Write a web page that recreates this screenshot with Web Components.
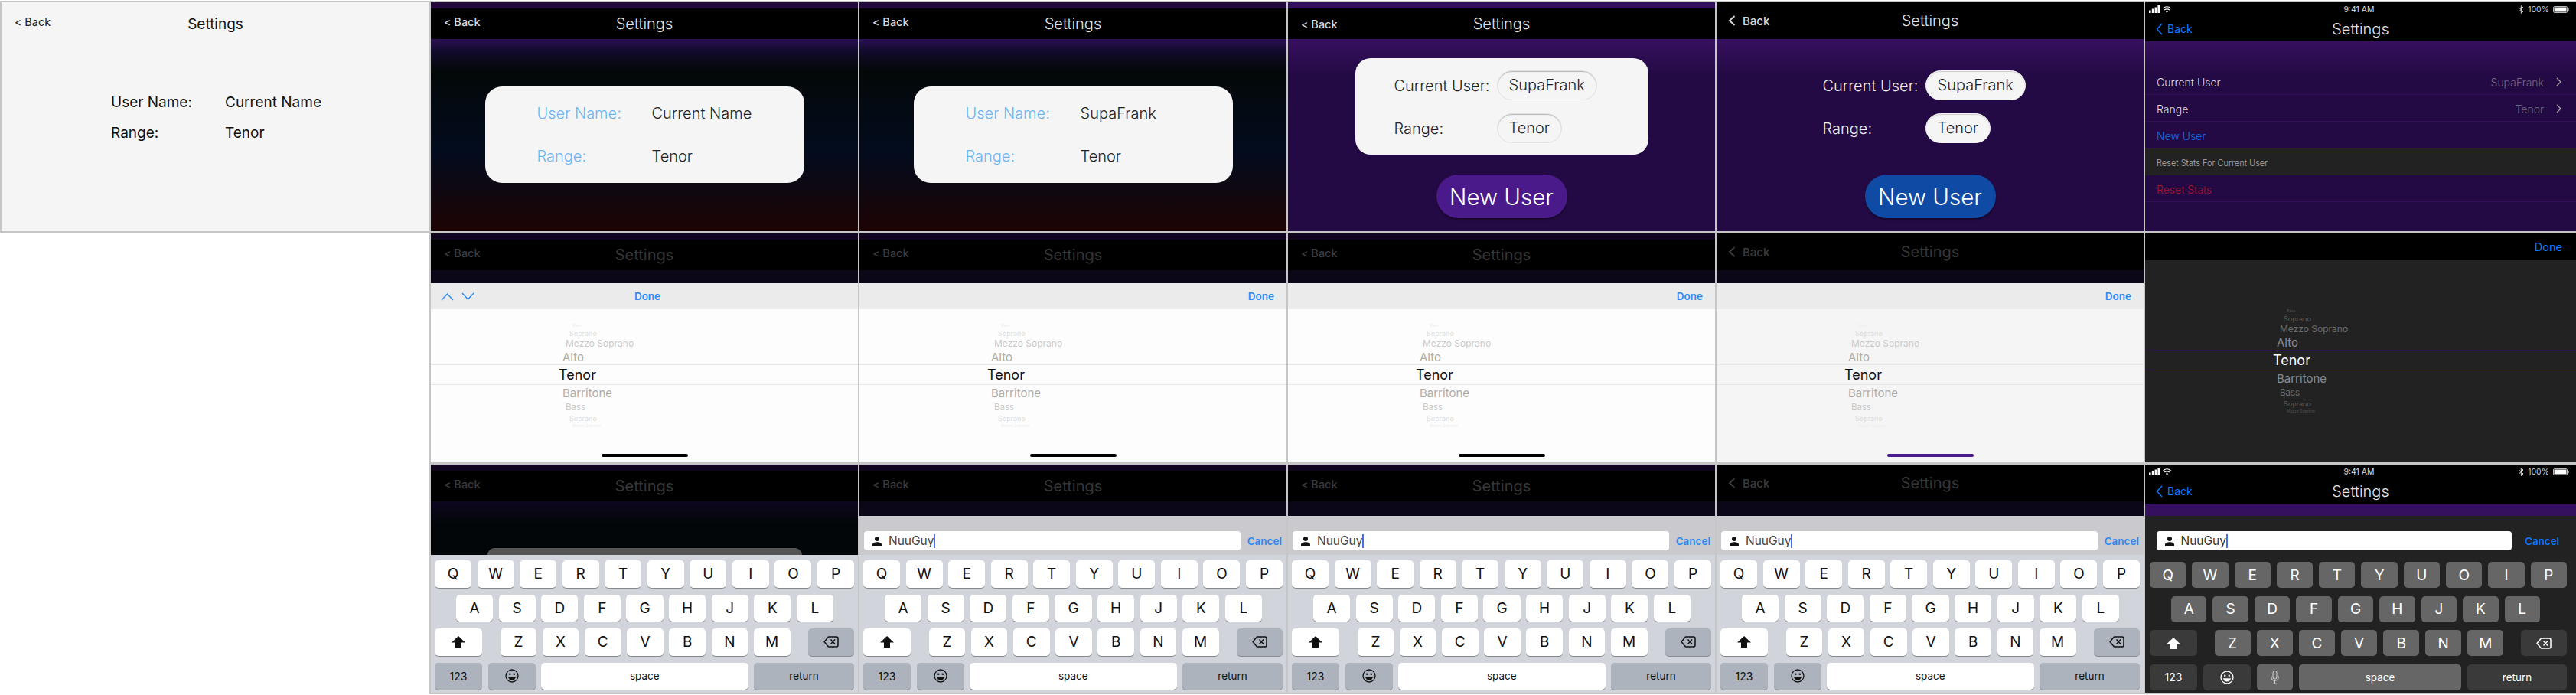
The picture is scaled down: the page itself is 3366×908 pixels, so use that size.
<!DOCTYPE html>
<html lang="en">
<head>
<meta charset="utf-8">
<title>Settings screens</title>
<style>
  html, body { margin: 0; background: #fff; }
  body { font-family: Inter, "Liberation Sans", sans-serif; }
  .board {
    display: grid;
    width: 3366px;
    height: 908px;
    box-sizing: border-box;
    padding: 3px 0 0 2px;
    grid-template-columns: 559px 558px 558px 558px 558px 1fr;
    grid-template-rows: 299px 299px 298px;
    gap: 3px 2px;
  }
</style>
</head>
<body>
<div class="board">
  <app-frame bg="paper">
    <app-nav tone="light"></app-nav>
    <user-form variant="plain" label-one="User Name:" value-one="Current Name"></user-form>
  </app-frame>
  <app-frame bg="night">
    <app-nav></app-nav>
    <user-form variant="card" label-one="User Name:" value-one="Current Name"></user-form>
  </app-frame>
  <app-frame bg="night">
    <app-nav></app-nav>
    <user-form variant="card" label-one="User Name:" value-one="SupaFrank"></user-form>
  </app-frame>
  <app-frame bg="purple">
    <app-nav strip="#33105c" low></app-nav>
    <user-form variant="pills" label-one="Current User:" value-one="SupaFrank"></user-form>
    <new-user color="#4a1a8a"></new-user>
  </app-frame>
  <app-frame bg="purple">
    <app-nav kind="chevron"></app-nav>
    <user-form variant="bare" label-one="Current User:" value-one="SupaFrank"></user-form>
    <new-user color="#0f4ba5"></new-user>
  </app-frame>
  <app-frame bg="purple">
    <app-nav kind="status"></app-nav>
    <settings-list></settings-list>
  </app-frame>

  <app-frame bg="dim" style="grid-column: 2">
    <app-nav dim></app-nav>
    <dim-band></dim-band>
    <picker-bar done="center" arrows></picker-bar>
    <wheel-picker></wheel-picker>
  </app-frame>
  <app-frame bg="dim">
    <app-nav dim></app-nav>
    <dim-band></dim-band>
    <picker-bar></picker-bar>
    <wheel-picker></wheel-picker>
  </app-frame>
  <app-frame bg="dim">
    <app-nav dim></app-nav>
    <dim-band></dim-band>
    <picker-bar></picker-bar>
    <wheel-picker></wheel-picker>
  </app-frame>
  <app-frame bg="dim">
    <app-nav dim kind="chevron"></app-nav>
    <dim-band></dim-band>
    <picker-bar></picker-bar>
    <wheel-picker tone="soft"></wheel-picker>
  </app-frame>
  <app-frame bg="coal">
    <picker-bar tone="dark"></picker-bar>
    <wheel-picker tone="dark"></wheel-picker>
  </app-frame>

  <app-frame bg="dim" style="grid-column: 2">
    <app-nav dim></app-nav>
    <dim-band stub></dim-band>
    <ios-keyboard></ios-keyboard>
  </app-frame>
  <app-frame bg="dim">
    <app-nav dim></app-nav>
    <dim-band size="19"></dim-band>
    <search-bar></search-bar>
    <ios-keyboard></ios-keyboard>
  </app-frame>
  <app-frame bg="dim">
    <app-nav dim></app-nav>
    <dim-band size="19"></dim-band>
    <search-bar></search-bar>
    <ios-keyboard></ios-keyboard>
  </app-frame>
  <app-frame bg="dim">
    <app-nav dim kind="chevron"></app-nav>
    <dim-band size="19"></dim-band>
    <search-bar></search-bar>
    <ios-keyboard></ios-keyboard>
  </app-frame>
  <app-frame bg="coal">
    <app-nav kind="status"></app-nav>
    <dim-band size="16" color="#35105f"></dim-band>
    <search-bar tone="dark"></search-bar>
    <ios-keyboard tone="dark" letters="QWERTYUOIP" mic></ios-keyboard>
  </app-frame>
</div>

<script>
// icons used by several elements
const ICONS = {
  shift: '<svg width="18" height="15" viewBox="0 0 18 15"><path fill="currentColor" d="M9 0 L18 8.5 H13 V15 H5 V8.5 H0 Z"/></svg>',
  back: '<svg width="20" height="15" viewBox="0 0 20 15"><path fill="none" stroke="currentColor" stroke-width="1.5" stroke-linejoin="round" d="M6.5 1 H17 a2 2 0 0 1 2 2 V12 a2 2 0 0 1 -2 2 H6.5 L1 7.5 Z"/><path fill="none" stroke="currentColor" stroke-width="1.5" d="M9.5 4.5 L15 10.5 M15 4.5 L9.5 10.5"/></svg>',
  emoji: '<svg width="18" height="18" viewBox="0 0 18 18"><circle cx="9" cy="9" r="8" fill="none" stroke="currentColor" stroke-width="1.3"/><circle cx="6.2" cy="6.8" r="1.2" fill="currentColor"/><circle cx="11.8" cy="6.8" r="1.2" fill="currentColor"/><path fill="currentColor" d="M4 10.2 H14 C13.6 13 11.6 14.6 9 14.6 C6.4 14.6 4.4 13 4 10.2 Z"/></svg>',
  mic: '<svg width="11" height="18" viewBox="0 0 11 18"><rect x="3" y="0.5" width="5" height="10.5" rx="2.5" fill="none" stroke="currentColor" stroke-width="1.1"/><path fill="none" stroke="currentColor" stroke-width="1.1" d="M0.8 7.5 V8.5 C0.8 11.2 2.8 13.2 5.5 13.2 C8.2 13.2 10.2 11.2 10.2 8.5 V7.5 M5.5 13.2 V17 M2.5 17.4 H8.5"/></svg>',
  person: '<svg width="12" height="12" viewBox="0 0 12 12"><circle cx="6" cy="3" r="3" fill="currentColor"/><path fill="currentColor" d="M0 12 V10.4 C0 8.2 3 7.2 6 7.2 C9 7.2 12 8.2 12 10.4 V12 Z"/></svg>',
  chevron: '<svg width="10" height="16" viewBox="0 0 10 16"><path fill="none" stroke="currentColor" stroke-width="2" d="M8.5 2 L2 8 L8.5 14"/></svg>',
  thinBack: '<svg width="9" height="16" viewBox="0 0 9 16"><path fill="none" stroke="currentColor" stroke-width="1.4" d="M8 1 L1.5 8 L8 15"/></svg>',
  disclosure: '<svg width="7" height="12" viewBox="0 0 7 12"><path fill="none" stroke="currentColor" stroke-width="1.2" d="M1 1 L6 6 L1 11"/></svg>',
  up: '<svg width="17" height="11" viewBox="0 0 17 11"><path fill="none" stroke="currentColor" stroke-width="1.4" d="M1 10 L8.5 2 L16 10"/></svg>',
  down: '<svg width="17" height="11" viewBox="0 0 17 11"><path fill="none" stroke="currentColor" stroke-width="1.4" d="M1 1 L8.5 9 L16 1"/></svg>',
  signal: '<svg width="15" height="10" viewBox="0 0 15 10"><rect x="0" y="6.5" width="2.6" height="3.5" fill="#fff"/><rect x="3.8" y="4.5" width="2.6" height="5.5" fill="#fff"/><rect x="7.6" y="2.5" width="2.6" height="7.5" fill="#fff"/><rect x="11.4" y="0" width="2.6" height="10" fill="#fff"/></svg>',
  wifi: '<svg width="11" height="9" viewBox="0 0 11 9"><path fill="none" stroke="#fff" stroke-width="1.3" d="M0.5 3 C3.5 0.2 7.5 0.2 10.5 3 M2.3 5 C4 3.5 7 3.5 8.7 5"/><path fill="#fff" d="M5.5 9 L3.8 6.8 C4.8 6 6.2 6 7.2 6.8 Z"/></svg>',
  bluetooth: '<svg width="7" height="11" viewBox="0 0 7 11"><path fill="none" stroke="#ddd" stroke-width="1" d="M0.5 3 L6 8 L3.3 10.4 V0.6 L6 3 L0.5 8"/></svg>',
  battery: '<svg width="21" height="9" viewBox="0 0 21 9"><rect x="0.5" y="0.5" width="18" height="8" rx="1.5" fill="none" stroke="#bbb"/><rect x="1.5" y="1.5" width="16" height="6" rx="0.6" fill="#fff"/><rect x="19.5" y="3" width="1.2" height="3" fill="#bbb"/></svg>'
};

class AppFrame extends HTMLElement {
  constructor() {
    super();
    this.attachShadow({ mode: 'open' });
    this.shadowRoot.innerHTML = `
      <style>
        :host {
          display: flex;
          flex-direction: column;
          min-width: 0;
          overflow: hidden;
          box-shadow: 0 0 0 2px #c6c6c6;
          position: relative;
        }
        :host([bg="paper"]) { background: #f5f5f5; }
        :host([bg="night"]) { background: linear-gradient(#2b1054 48px, #120a2c 64px, #030808 90px, #030c1e 195px, #1d0303 299px); }
        :host([bg="purple"]) { background: linear-gradient(#37105f 48px, #240a45 95px); }
        :host([bg="dim"]) { background: #0b0618; }
        :host([bg="coal"]) { background: #222; }
      </style>
      <slot></slot>`;
  }
}

class AppNav extends HTMLElement {
  constructor() {
    super();
    this.attachShadow({ mode: 'open' });
  }

  connectedCallback() {
    const kind = this.getAttribute('kind') || 'old';
    let backHtml = '<span class="lt">&lt;</span> Back';
    if (kind === 'chevron') backHtml = `<span class="ico">${ICONS.chevron}</span>Back`;
    if (kind === 'status') backHtml = `<span class="ico">${ICONS.thinBack}</span>Back`;
    const status = kind === 'status' ? `
      <div class="status">
        <span class="side">${ICONS.signal}${ICONS.wifi}</span>
        <span class="time">9:41 AM</span>
        <span class="side right">${ICONS.bluetooth}<span>100%</span>${ICONS.battery}</span>
      </div>` : '';
    const strip = kind === 'old' ? '<div class="strip"></div>' : '';
    this.shadowRoot.innerHTML = `
      <style>
        :host { display: block; background: #000; color: #fff; flex: none; }
        .strip { height: 8px; background: var(--strip, #24093f); }
        .bar {
          display: grid;
          grid-template-columns: 1fr auto 1fr;
          align-items: center;
          height: 40px;
        }
        .title { font-size: 20px; font-weight: 300; color: #e4e4e4; }
        .back {
          padding-left: 17px;
          margin-bottom: 6px;
          font-size: 14.5px;
          font-weight: 500;
          color: #d8d8d8;
          display: flex;
          align-items: center;
        }
        .lt { font-size: 14px; margin-right: 4px; }
        .ico { display: inline-flex; }
        :host([low]) .back { margin-bottom: 0; }
        :host([kind="chevron"]) .bar { height: 48px; }
        :host([kind="chevron"]) .back { padding-left: 15px; margin-bottom: 0; font-size: 15px; }
        :host([kind="chevron"]) .ico { margin-right: 9px; }
        :host([kind="status"]) .bar { height: 33px; }
        :host([kind="status"]) .back {
          padding-left: 14px;
          margin-bottom: 0;
          color: #0a7aff;
          font-weight: 400;
          font-size: 14px;
        }
        :host([kind="status"]) .ico { margin-right: 6px; }
        :host([tone="light"]) { background: transparent; color: #111; }
        :host([tone="light"]) .strip { background: transparent; }
        :host([tone="light"]) .title { color: #111; font-weight: 400; font-size: 19px; }
        :host([tone="light"]) .back { color: #222; font-weight: 400; }
        :host([dim]) .title { color: #363636; font-weight: 400; }
        :host([dim]) .back { color: #3c3c3c; }
        :host([dim]) .strip { background: #12051f; }
        .status {
          height: 18px;
          padding: 0 9px 0 5px;
          display: grid;
          grid-template-columns: 1fr auto 1fr;
          align-items: center;
          font-size: 10.5px;
          color: #ddd;
        }
        .side { display: flex; align-items: center; gap: 3px; }
        .right { justify-content: flex-end; gap: 5px; color: #ccc; }
      </style>
      ${status}
      ${strip}
      <div class="bar">
        <div class="back">${backHtml}</div>
        <div class="title">Settings</div>
        <div></div>
      </div>`;
    const stripColor = this.getAttribute('strip');
    if (stripColor) this.style.setProperty('--strip', stripColor);
  }
}

class UserForm extends HTMLElement {
  constructor() {
    super();
    this.attachShadow({ mode: 'open' });
  }

  connectedCallback() {
    const labelOne = this.getAttribute('label-one');
    const valueOne = this.getAttribute('value-one');
    this.shadowRoot.innerHTML = `
      <style>
        :host { display: flex; justify-content: center; flex: none; }
        .form {
          display: grid;
          align-items: center;
          font-size: 20px;
          font-weight: 300;
          color: #222;
          box-sizing: border-box;
          background: #f5f5f5;
        }
        /* plain first screen */
        :host([variant="plain"]) .form {
          background: transparent;
          width: 100%;
          margin-top: 62px;
          padding-left: 143px;
          grid-template-columns: 149px 1fr;
          grid-auto-rows: 40px;
          font-size: 19px;
          font-weight: 400;
          color: #111;
        }
        /* white card with blue labels */
        :host([variant="card"]) .form {
          width: 417px;
          height: 126px;
          margin-top: 62px;
          padding: 7px 0 0 68px;
          border-radius: 22px;
          grid-template-columns: 150px 1fr;
          grid-auto-rows: 56px;
          align-content: start;
        }
        :host([variant="card"]) .label { color: #6db6f6; }
        /* card with pills, and the same without the card */
        :host([variant="pills"]) .form,
        :host([variant="bare"]) .form {
          width: 383px;
          height: 126px;
          margin-top: 25px;
          padding: 16px 0 0 51px;
          border-radius: 20px;
          grid-template-columns: 134px 1fr;
          grid-auto-rows: 39px;
          row-gap: 17px;
          align-content: start;
        }
        :host([variant="bare"]) .form { background: transparent; }
        :host([variant="bare"]) .label { color: #eee; }
        :host([variant="pills"]) .value,
        :host([variant="bare"]) .value {
          justify-self: start;
          line-height: 37px;
          padding: 0 15px;
          border-radius: 20px;
          background: #f5f5f5;
          border: 1px solid #e2e2e2;
          box-shadow: inset 0 1px 1px #b4b4b4;
        }
        :host([variant="bare"]) .value { border-color: #f5f5f5; box-shadow: inset 0 1px 1px #ccc; }
      </style>
      <div class="form">
        <div class="label">${labelOne}</div><div class="value">${valueOne}</div>
        <div class="label">Range:</div><div class="value">Tenor</div>
      </div>`;
  }
}

class NewUser extends HTMLElement {
  constructor() {
    super();
    this.attachShadow({ mode: 'open' });
  }

  connectedCallback() {
    this.shadowRoot.innerHTML = `
      <style>
        :host { display: flex; justify-content: center; flex: none; margin-top: 26px; }
        button {
          width: 171px;
          height: 57px;
          border: 0;
          border-radius: 29px;
          font: 300 29.5px Inter, "Liberation Sans", sans-serif;
          color: #fff;
          background: ${this.getAttribute('color')};
          box-shadow: 0 2px 3px rgba(0,0,0,.45);
        }
      </style>
      <button>New User</button>`;
  }
}

class SettingsList extends HTMLElement {
  constructor() {
    super();
    this.attachShadow({ mode: 'open' });
  }

  connectedCallback() {
    const row = (cls, left, right) => `
      <div class="row ${cls}">
        <span>${left}</span>
        ${right ? `<span class="val">${right}</span><span class="dis">${ICONS.disclosure}</span>` : ''}
      </div>`;
    this.shadowRoot.innerHTML = `
      <style>
        :host { display: block; padding-top: 35px; font-size: 14px; font-weight: 300; color: #ddd; }
        .row {
          display: flex;
          align-items: center;
          height: 35px;
          box-sizing: border-box;
          padding: 2px 19px 0 15px;
          border-bottom: 1px solid #331058;
        }
        .val { margin-left: auto; color: #6f6a80; }
        .dis { display: inline-flex; margin-left: 16px; color: #aaa; }
        .blue { color: #0a6fe6; }
        .head { background: #222; border-bottom: 0; font-size: 11px; color: #aaa; }
        .red { color: #a8152a; }
      </style>
      ${row('', 'Current User', 'SupaFrank')}
      ${row('', 'Range', 'Tenor')}
      ${row('blue', 'New User')}
      ${row('head', 'Reset Stats For Current User')}
      ${row('red', 'Reset Stats')}`;
  }
}

class DimBand extends HTMLElement {
  constructor() {
    super();
    this.attachShadow({ mode: 'open' });
  }

  connectedCallback() {
    const size = this.getAttribute('size');
    const color = this.getAttribute('color');
    const stub = this.hasAttribute('stub');
    this.shadowRoot.innerHTML = `
      <style>
        :host {
          display: flex;
          align-items: flex-end;
          justify-content: center;
          overflow: hidden;
          height: ${size ? size + 'px' : stub ? '70px' : '17px'};
          background: ${color || (stub ? 'linear-gradient(#0e0620, #020608 30px)' : '#0b0618')};
          flex: none;
        }
        .stub { width: 411px; height: 9px; background: #555; border-radius: 22px 22px 0 0; }
      </style>
      ${stub ? '<div class="stub"></div>' : ''}`;
  }
}

class PickerBar extends HTMLElement {
  constructor() {
    super();
    this.attachShadow({ mode: 'open' });
  }

  connectedCallback() {
    const arrows = this.hasAttribute('arrows')
      ? `<span class="arrows">${ICONS.up}${ICONS.down}</span>` : '';
    this.shadowRoot.innerHTML = `
      <style>
        :host {
          display: flex;
          align-items: center;
          justify-content: flex-end;
          position: relative;
          height: 34px;
          padding: 0 16px;
          flex: none;
          background: #ebebeb;
          font-size: 13.5px;
          font-weight: 600;
          color: #2a8af6;
        }
        :host([done="center"]) { justify-content: center; padding-left: 24px; }
        :host([tone="dark"]) {
          background: #000;
          color: #0a7aff;
          height: 35px;
          padding-right: 18px;
          font-size: 14.5px;
          font-weight: 400;
        }
        .arrows {
          position: absolute;
          left: 13px;
          top: 12px;
          display: flex;
          gap: 10px;
        }
      </style>
      ${arrows}<span>Done</span>`;
  }
}

class WheelPicker extends HTMLElement {
  constructor() {
    super();
    this.attachShadow({ mode: 'open' });
  }

  connectedCallback() {
    this.shadowRoot.innerHTML = `
      <style>
        :host {
          display: flex;
          flex-direction: column;
          flex: 1;
          padding-top: 16px;
          background: #fdfdfd;
          --near: #acacac;
          --mid: #cacaca;
          --far: #dcdcdc;
          --tiny: #ececec;
          --pick: #111;
          --line: #e8e8e8;
          --home: #000;
        }
        :host([tone="soft"]) { background: #f5f5f5; --home: #4a1a8a; }
        :host([tone="dark"]) {
          background: #222;
          padding-top: 61px;
          --near: #8c8c8c;
          --mid: #6c6c6c;
          --far: #5c5c5c;
          --tiny: #505050;
          --pick: #fff;
          --line: #2c1448;
        }
        .i { display: flex; align-items: center; white-space: nowrap; }
        .t5 { height: 10px; font-size: 5px; padding-left: 185px; color: var(--tiny); }
        .t9 { height: 10px; font-size: 9px; padding-left: 181px; color: var(--far); }
        .t12 { height: 16px; font-size: 12px; padding-left: 176px; color: var(--mid); }
        .t15 { height: 20px; font-size: 15px; padding-left: 172px; color: var(--near); }
        .b11 { height: 18px; font-size: 11.5px; padding-left: 176px; color: var(--mid); }
        .pick {
          height: 27px;
          box-sizing: border-box;
          font-size: 18px;
          padding-left: 167px;
          color: var(--pick);
          border-top: 1px solid var(--line);
          border-bottom: 1px solid var(--line);
        }
        .home {
          width: 113px;
          height: 4px;
          margin: auto auto 7px;
          border-radius: 2px;
          background: var(--home);
        }
        :host([tone="dark"]) .home { display: none; }
      </style>
      <div class="i t5">Bass</div>
      <div class="i t9">Soprano</div>
      <div class="i t12">Mezzo Soprano</div>
      <div class="i t15">Alto</div>
      <div class="i pick">Tenor</div>
      <div class="i t15">Barritone</div>
      <div class="i b11">Bass</div>
      <div class="i t9">Soprano</div>
      <div class="i t5">Mezzo Soprano</div>
      <div class="home"></div>`;
  }
}

class SearchBar extends HTMLElement {
  constructor() {
    super();
    this.attachShadow({ mode: 'open' });
  }

  connectedCallback() {
    this.shadowRoot.innerHTML = `
      <style>
        :host {
          display: flex;
          align-items: center;
          flex: none;
          padding: 20px 6px 6px;
          background: #c9c9ce;
        }
        :host([tone="dark"]) { background: #222; padding: 20px 22px 15px 14.5px; }
        .field {
          flex: 1;
          display: flex;
          align-items: center;
          height: 25px;
          padding-left: 11px;
          border-radius: 4px;
          background: #fff;
          font-size: 15.5px;
          color: #444;
        }
        :host([tone="dark"]) .field { color: #333; }
        .who { display: inline-flex; margin-right: 9px; color: #111; }
        .caret { width: 2px; height: 18px; background: #4a6fe0; }
        .cancel { margin-left: 9px; font-size: 13.5px; font-weight: 600; color: #2a8af6; }
        :host([tone="dark"]) .cancel { margin-left: 17px; color: #0a7aff; font-weight: 500; }
      </style>
      <div class="field"><span class="who">${ICONS.person}</span>NuuGuy<span class="caret"></span></div>
      <span class="cancel">Cancel</span>`;
  }
}

class IosKeyboard extends HTMLElement {
  constructor() {
    super();
    this.attachShadow({ mode: 'open' });
  }

  keys(chars) {
    return chars.split('').map(c => `<div class="key">${c}</div>`).join('');
  }

  connectedCallback() {
    const top = this.getAttribute('letters') || 'QWERTYUIOP';
    const mic = this.hasAttribute('mic') ? `<div class="key mic">${ICONS.mic}</div>` : '';
    this.shadowRoot.innerHTML = `
      <style>
        :host {
          display: flex;
          flex-direction: column;
          flex: 1;
          gap: 9px;
          padding: 7px 5px 4px;
          background: #d1d5db;
          --key: #fff;
          --fn: #acb3bc;
          --ink: #111;
          --edge: #898a8d;
        }
        :host([tone="dark"]) {
          background: #222;
          padding: 0 12px 4px 6px;
          gap: 10.5px;
          --key: #666;
          --fn: #3a3a3a;
          --ink: #fff;
          --edge: transparent;
        }
        .row { display: flex; gap: 7.5px; height: 35.5px; }
        :host([tone="dark"]) .row { height: 34px; gap: 8px; }
        .row.two { padding: 0 27px 0 28px; }
        :host([tone="dark"]) .row.two { padding: 0 35px 0 28px; }
        .row.three { justify-content: space-between; }
        .letters { display: flex; gap: 7.5px; width: 379px; }
        :host([tone="dark"]) .letters { gap: 8px; width: 378px; }
        .key {
          flex: 1;
          display: flex;
          align-items: center;
          justify-content: center;
          border-radius: 5px;
          background: var(--key);
          color: var(--ink);
          font-size: 19px;
          box-shadow: 0 1px 0 var(--edge);
        }
        .fn { flex: none; width: 62px; background: var(--fn); font-size: 14px; }
        .shift { background: #fff; }
        :host([tone="dark"]) .shift { background: var(--fn); }
        .back-key { width: 60px; }
        .small { font-size: 13.5px; }
        .space { flex: 1; }
        .ret { flex: none; width: 131px; background: var(--fn); }
        :host([tone="dark"]) .ret { width: 130px; }
        .mic { flex: none; width: 47px; color: #ccc; }
      </style>
      <div class="row">${this.keys(top)}</div>
      <div class="row two">${this.keys('ASDFGHJKL')}</div>
      <div class="row three">
        <div class="key fn shift">${ICONS.shift}</div>
        <div class="letters">${this.keys('ZXCVBNM')}</div>
        <div class="key fn back-key">${ICONS.back}</div>
      </div>
      <div class="row">
        <div class="key fn">123</div>
        <div class="key fn">${ICONS.emoji}</div>
        ${mic}
        <div class="key space small">space</div>
        <div class="key ret small">return</div>
      </div>`;
  }
}

customElements.define('app-frame', AppFrame);
customElements.define('app-nav', AppNav);
customElements.define('user-form', UserForm);
customElements.define('new-user', NewUser);
customElements.define('settings-list', SettingsList);
customElements.define('dim-band', DimBand);
customElements.define('picker-bar', PickerBar);
customElements.define('wheel-picker', WheelPicker);
customElements.define('search-bar', SearchBar);
customElements.define('ios-keyboard', IosKeyboard);
</script>
</body>
</html>
